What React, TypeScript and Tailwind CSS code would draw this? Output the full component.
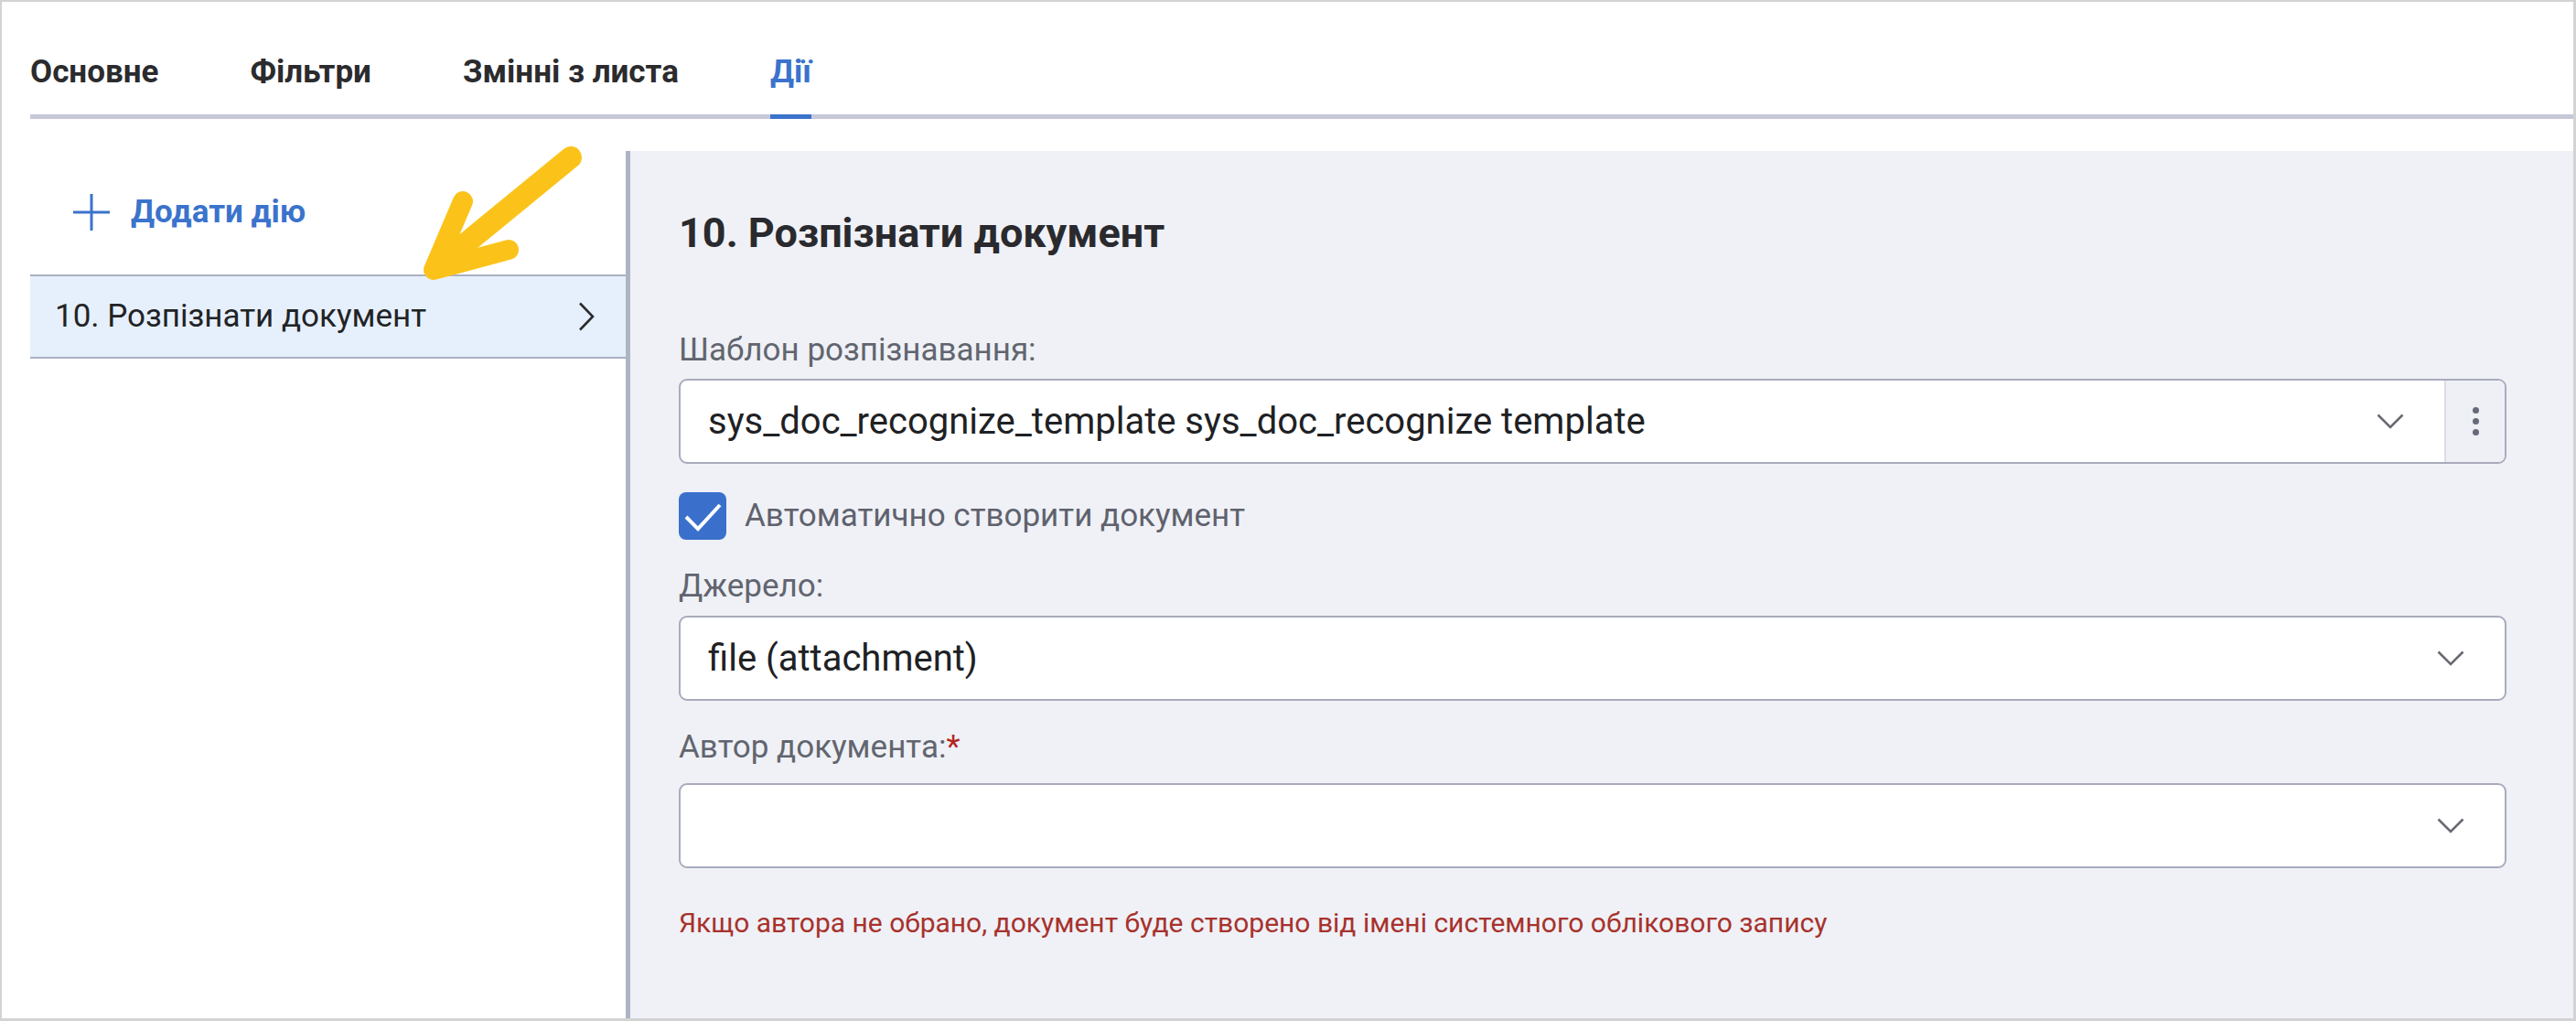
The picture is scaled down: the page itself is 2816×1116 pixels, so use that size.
import React from 'react'

const tabs = ['Основне', 'Фільтри', 'Змінні з листа', 'Дії']

function Chevron() {
    return (
        <svg width="30" height="17" viewBox="0 0 30 17" fill="none">
            <path d="M1.5 1.5 L15 15 L28.5 1.5" stroke="#686a72" strokeWidth="2.6" />
        </svg>
    )
}

function SelectBox({ value, menu }: { value?: string; menu?: boolean }) {
    return (
        <div className="flex h-[93px] items-stretch rounded-[9px] border-2 border-[#a9abbd] bg-white">
            <div className="flex flex-1 items-center justify-between pl-[30px] pr-[44px]">
                <span className="text-[40px] leading-none text-[#202124]">{value}</span>
                <Chevron />
            </div>
            {menu && (
                <div className="flex w-[66px] flex-col items-center justify-center gap-[5px] rounded-r-[7px] border-l-2 border-[#dcdee6] bg-[#eef0f5]">
                    <span className="h-[7px] w-[7px] rounded-full bg-[#666a78]" />
                    <span className="h-[7px] w-[7px] rounded-full bg-[#666a78]" />
                    <span className="h-[7px] w-[7px] rounded-full bg-[#666a78]" />
                </div>
            )}
        </div>
    )
}

export default function App() {
    return (
        <div className="relative flex h-[1116px] w-[2816px] flex-col overflow-hidden border-t-2 border-l-2 border-r-[3px] border-b-[3px] border-[#d3d3d3] bg-white font-[Roboto,sans-serif]">
            {/* Вкладки */}
            <div className="ml-[31px] flex gap-[100px] border-b-[5px] border-[#c6c8d7] pt-[57px]">
                {tabs.map((tab, i) => (
                    <div
                        key={tab}
                        className={
                            i === 3
                                ? '-mb-[5px] border-b-[5px] border-[#3b73cc] pb-[26px] text-[35px] font-bold leading-[40px] text-[#3b73cc]'
                                : '-mb-[5px] border-b-[5px] border-transparent pb-[26px] text-[35px] font-bold leading-[40px] text-[#2b2b2e]'
                        }
                    >
                        {tab}
                    </div>
                ))}
            </div>

            <div className="flex flex-1">
                {/* Ліва колонка */}
                <div className="w-[682px] shrink-0 bg-white pt-[82px]">
                    <div className="flex h-[40px] items-center gap-[23px] pl-[78px]">
                        <svg width="40" height="40" viewBox="0 0 40 40">
                            <path d="M20 0 V40 M0 20 H40" stroke="#3b73cc" strokeWidth="3" />
                        </svg>
                        <span className="text-[35px] font-bold text-[#3b73cc]">Додати дію</span>
                    </div>
                    <div className="ml-[31px] mt-[48px] flex h-[92px] items-center justify-between border-y-2 border-[#aab1c1] bg-[#e6f0fc] pl-[27px] pr-[34px]">
                        <span className="text-[35px] text-[#222326]">10. Розпізнати документ</span>
                        <svg width="18" height="32" viewBox="0 0 18 32" fill="none">
                            <path d="M2 1.5 L16 16 L2 30.5" stroke="#2b2b2e" strokeWidth="2.6" />
                        </svg>
                    </div>
                </div>

                {/* Права панель */}
                <div className="mt-[35px] flex-1 border-l-[5px] border-[#adb4c4] bg-[#eff1f6] pl-[53px] pr-[73px] pt-[66px]">
                    <h2 className="text-[45px] font-bold leading-[48px] text-[#2a2a2e]">10. Розпізнати документ</h2>

                    <div className="mt-[84px] text-[35px] leading-[40px] text-[#62656f]">Шаблон розпізнавання:</div>
                    <div className="mt-[11px]">
                        <SelectBox value="sys_doc_recognize_template sys_doc_recognize template" menu />
                    </div>

                    <div className="mt-[31px] flex h-[52px] items-center gap-[20px]">
                        <div className="flex h-[52px] w-[52px] items-center justify-center rounded-[8px] bg-[#3a70cc]">
                            <svg width="52" height="52" viewBox="0 0 52 52" fill="none">
                                <path d="M8 27 L21 40 L45 14" stroke="white" strokeWidth="4" />
                            </svg>
                        </div>
                        <span className="text-[35px] text-[#5f626d]">Автоматично створити документ</span>
                    </div>

                    <div className="mt-[31px] text-[35px] leading-[40px] text-[#62656f]">Джерело:</div>
                    <div className="mt-[12px]">
                        <SelectBox value="file (attachment)" />
                    </div>

                    <div className="mt-[31px] text-[35px] leading-[40px] text-[#62656f]">
                        Автор документа:<span className="text-[#b3261e]">*</span>
                    </div>
                    <div className="mt-[19px]">
                        <SelectBox />
                    </div>

                    <div className="mt-[42px] text-[30px] leading-[36px] text-[#a8322d]">
                        Якщо автора не обрано, документ буде створено від імені системного облікового запису
                    </div>
                </div>
            </div>

            {/* Стрілка-підказка */}
            <svg className="pointer-events-none absolute left-0 top-0" width="700" height="320" viewBox="0 0 700 320" fill="none">
                <path d="M622 170 L478 288" stroke="#fbc31a" strokeWidth="24" strokeLinecap="round" />
                <path d="M504 218 L472 293 L554 271" stroke="#fbc31a" strokeWidth="22" strokeLinecap="round" strokeLinejoin="round" />
            </svg>
        </div>
    )
}
